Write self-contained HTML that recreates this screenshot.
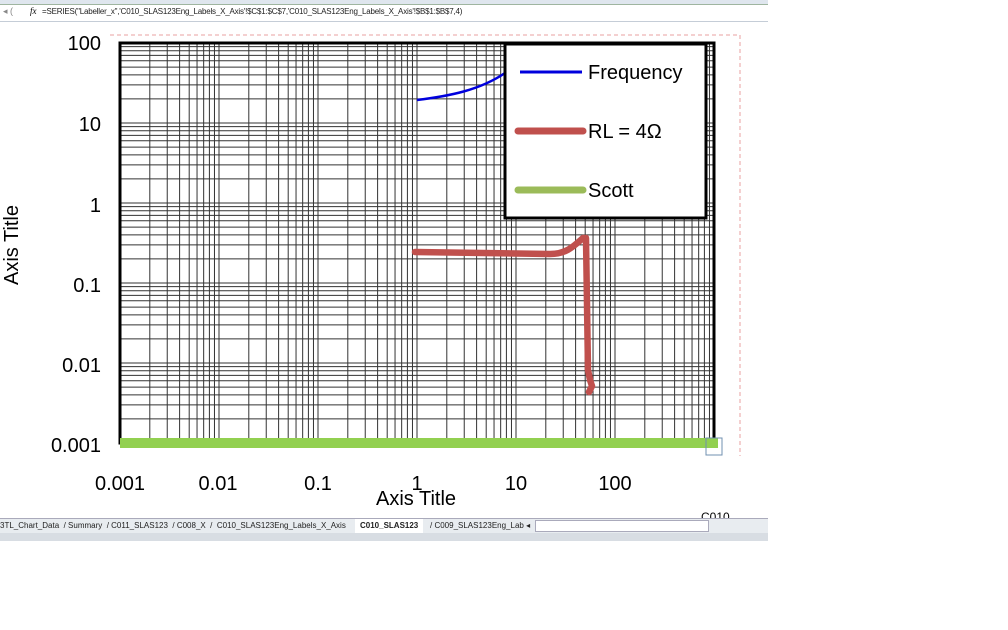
<!DOCTYPE html>
<html><head><meta charset="utf-8"><style>
body{margin:0;width:1008px;height:630px;background:#fff;overflow:hidden;position:relative;font-family:"Liberation Sans",sans-serif}
.abs{position:absolute}
</style></head><body>
<div class="abs" style="left:0;top:0;width:768px;height:4px;background:#dfe6ee;border-bottom:1px solid #9fb5a0"></div>
<div class="abs" style="left:0;top:5px;width:768px;height:16px;background:#fff;border-bottom:1px solid #c5cdd7"></div>
<div class="abs" style="left:3px;top:6px;font-size:9px;color:#888">◂ (</div>
<div class="abs" style="left:30px;top:6px;font-size:9px;font-style:italic;font-family:'Liberation Serif',serif">fx</div>
<div class="abs" style="left:42px;top:7px;font-size:8px;color:#222;letter-spacing:-0.2px">=SERIES("Labeller_x",'C010_SLAS123Eng_Labels_X_Axis'!$C$1:$C$7,'C010_SLAS123Eng_Labels_X_Axis'!$B$1:$B$7,4)</div>
<svg class="abs" style="left:0;top:0" width="768" height="518" id="s">
<path d="M110 35 H740 V456" fill="none" stroke="#e8a0a0" stroke-dasharray="4,3"/>
<g id="g" stroke="#333" stroke-width="1"></g>
<rect x="120" y="43" width="594" height="400" fill="none" stroke="#000" stroke-width="3"/>
<path d="M417 100 C450 96 480 90 505 73" fill="none" stroke="#0000dd" stroke-width="2.5"/>
<path d="M415 252 L550 254 C565 254 572 248 583 238 L586 238 L588 370 L590 380 L592 386 L589 392" fill="none" stroke="#c0504d" stroke-width="6.5" stroke-linejoin="round" stroke-linecap="round"/>
<rect x="120" y="438" width="598" height="10" fill="#92d050"/>
<rect x="706" y="438" width="16" height="17" fill="none" stroke="#7090b0"/>
<rect x="505" y="44" width="201" height="174" fill="#fff" stroke="#000" stroke-width="3"/>
<line x1="520" y1="72" x2="582" y2="72" stroke="#0000dd" stroke-width="3"/>
<line x1="518" y1="131" x2="583" y2="131" stroke="#c0504d" stroke-width="7" stroke-linecap="round"/>
<line x1="518" y1="190" x2="583" y2="190" stroke="#9bbb59" stroke-width="7" stroke-linecap="round"/>
<g font-size="20" fill="#000">
<text x="588" y="79">Frequency</text><text x="588" y="138">RL = 4Ω</text><text x="588" y="197">Scott</text>
<text x="101" y="50" text-anchor="end">100</text><text x="101" y="131" text-anchor="end">10</text>
<text x="101" y="212" text-anchor="end">1</text><text x="101" y="292" text-anchor="end">0.1</text>
<text x="101" y="372" text-anchor="end">0.01</text><text x="101" y="452" text-anchor="end">0.001</text>
<text x="120" y="490" text-anchor="middle">0.001</text><text x="218" y="490" text-anchor="middle">0.01</text>
<text x="318" y="490" text-anchor="middle">0.1</text><text x="417" y="490" text-anchor="middle">1</text>
<text x="516" y="490" text-anchor="middle">10</text><text x="615" y="490" text-anchor="middle">100</text>
<text x="416" y="505" text-anchor="middle">Axis  Title</text>
<text x="18" y="245" text-anchor="middle" transform="rotate(-90 18 245)">Axis  Title</text>
</g>
<text x="701" y="521" font-size="12">C010</text>
</svg>
<div class="abs" style="left:0;top:518px;width:768px;height:14px;background:#e8ecf0;border-top:1px solid #aab;font-size:8px;color:#222;white-space:nowrap">
<span class="abs" style="left:0;top:2px">3TL_Chart_Data &nbsp;/ Summary &nbsp;/ C011_SLAS123 &nbsp;/ C008_X &nbsp;/ &nbsp;C010_SLAS123Eng_Labels_X_Axis</span>
<span class="abs" style="left:355px;top:0;height:13px;background:#fff;padding:2px 5px 0;font-weight:bold">C010_SLAS123</span>
<span class="abs" style="left:430px;top:2px">/ C009_SLAS123Eng_Lab ◂</span>
<span class="abs" style="left:535px;top:1px;width:172px;height:10px;background:#fff;border:1px solid #aab"></span>
</div>
<div class="abs" style="left:0;top:533px;width:768px;height:8px;background:#d8dde3"></div>
<script>
var g=document.getElementById('g'),h='';
var L=Math.log10;
for(var d=0;d<6;d++)for(var k=1;k<10;k++){var x=120+99*(d+L(k));h+='<line x1="'+x+'" y1="43" x2="'+x+'" y2="443"/>';}
for(var d=0;d<5;d++)for(var k=1;k<10;k++){var y=443-80*(d+L(k));h+='<line x1="120" y1="'+y+'" x2="714" y2="'+y+'"/>';}
g.innerHTML=h;
</script>
</body></html>
